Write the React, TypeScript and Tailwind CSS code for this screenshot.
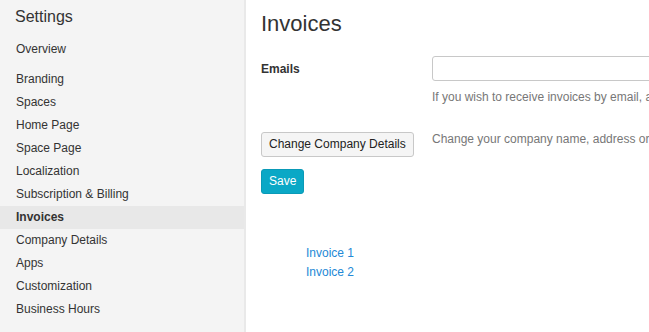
import React from "react";

const navTop = ["Overview"];
const navItems = [
  "Branding",
  "Spaces",
  "Home Page",
  "Space Page",
  "Localization",
  "Subscription & Billing",
  "Invoices",
  "Company Details",
  "Apps",
  "Customization",
  "Business Hours",
];

export default function App() {
  return (
    <div
      className="flex h-[332px] w-[649px] overflow-hidden bg-white text-[#333]"
      style={{ fontFamily: '"Liberation Sans", Arial, sans-serif' }}
    >
      <aside className="flex w-[246px] shrink-0 flex-col border-r-2 border-[#e9e9e9] bg-[#f4f4f4]">
        <div className="pl-[15px] pt-[8px] text-[16px] leading-[18px] text-[#333]">Settings</div>
        <div className="mt-[12px]">
          {navTop.map((n) => (
            <div key={n} className="h-[23px] px-4 text-[12px] leading-[23px]">
              {n}
            </div>
          ))}
        </div>
        <div className="mt-[7px]">
          {navItems.map((n) => (
            <div
              key={n}
              className={
                n === "Invoices"
                  ? "h-[23px] bg-[#e8e8e8] px-4 text-[12px] font-bold leading-[23px]"
                  : "h-[23px] px-4 text-[12px] leading-[23px]"
              }
            >
              {n}
            </div>
          ))}
        </div>
      </aside>
      <main className="min-w-0 flex-1 overflow-hidden pl-[15px]">
        <h1 className="pt-[11px] text-[22px] leading-[26px] text-[#333]">Invoices</h1>
        <div className="mt-[19px] flex items-center">
          <label className="w-[171px] shrink-0 text-[12px] font-bold leading-[14px]">Emails</label>
          <input
            type="text"
            className="h-[25px] w-[400px] shrink-0 rounded-[3px] border border-[#c8c8c8] bg-white outline-none"
          />
        </div>
        <div className="ml-[171px] mt-[9px] whitespace-nowrap text-[12px] leading-[14px] text-[#777]">
          If you wish to receive invoices by email, add one or more email addresses separated by commas.
        </div>
        <div className="mt-[27px] flex items-start">
          <div className="w-[171px] shrink-0">
            <button className="h-[25px] rounded-[3px] border border-[#c8c8c8] bg-[#f5f5f5] px-[7px] text-[12px] leading-[23px] text-[#222]">
              Change Company Details
            </button>
          </div>
          <div className="whitespace-nowrap pt-[1px] text-[12px] leading-[14px] text-[#777]">
            Change your company name, address or other details shown on your invoices.
          </div>
        </div>
        <button className="mt-[12px] h-[25px] rounded-[3px] border border-[#0a9ab7] bg-[#0aa8c6] px-[7px] text-[12px] leading-[23px] text-white">
          Save
        </button>
        <ul className="mt-[50px] pl-[45px] text-[12px] leading-[19px]">
          <li className="text-[#2389d6]">Invoice 1</li>
          <li className="text-[#2389d6]">Invoice 2</li>
        </ul>
      </main>
    </div>
  );
}
